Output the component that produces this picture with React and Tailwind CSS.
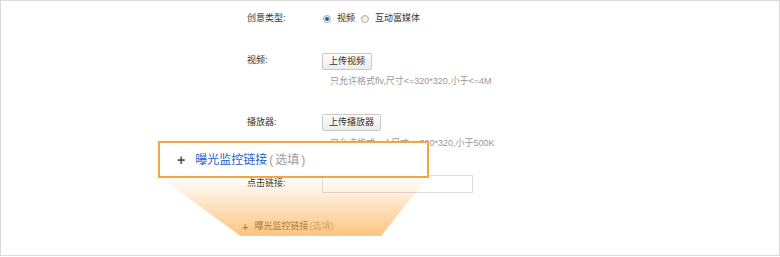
import React from "react";

function Radio({ checked }) {
  return (
    <span className="relative inline-flex h-[8px] w-[8px] items-center justify-center rounded-full border border-[#a9a9a9] bg-gradient-to-b from-[#e9e9e9] to-[#fbfbfb]">
      {checked && <span className="h-[4px] w-[4px] rounded-full bg-[#1d5fa6]" />}
    </span>
  );
}

function Btn({ children }) {
  return (
    <span className="inline-flex h-[17px] items-center rounded-[2px] border border-[#c9c9c9] bg-gradient-to-b from-[#fdfdfd] to-[#ececec] px-[6px] text-[9px] leading-none text-[#333]">
      {children}
    </span>
  );
}

export default function App() {
  return (
    <div className="relative h-[256px] w-[780px] overflow-hidden border border-[#dadada] bg-white font-['Liberation_Sans','Noto_Sans_CJK_SC',sans-serif] text-[9px] text-[#333]">
      <div className="flex flex-col pl-[246px] pt-[12px]">
        <div className="flex h-[12px] items-center">
          <span className="w-[75px]">创意类型:</span>
          <span className="ml-[1px] flex items-center gap-[6px]">
            <Radio checked />
            <span>视频</span>
            <Radio />
            <span>互动富媒体</span>
          </span>
        </div>

        <div className="mt-[28px] flex h-[16px] items-center">
          <span className="w-[75px]">视频:</span>
          <Btn>上传视频</Btn>
        </div>
        <div className="mt-[7px] flex h-[12px] items-center pl-[83px] text-[#999]">
          只允许格式flv,尺寸&lt;=320*320,小于&lt;=4M
        </div>

        <div className="mt-[26px] flex h-[17px] items-center">
          <span className="w-[75px]">播放器:</span>
          <Btn>上传播放器</Btn>
        </div>
        <div className="mt-[7px] flex h-[12px] items-center pl-[83px] text-[#999]">
          只允许格式swf,尺寸&lt;=320*320,小于500K
        </div>

        <div className="mt-[25px] flex h-[18px] items-center">
          <span className="w-[75px]">点击链接:</span>
          <span className="h-[18px] w-[151px] border border-[#dedede] bg-white" />
        </div>

        <div className="ml-[-5px] mt-[28px] flex h-[12px] items-center">
          <span className="mr-[6px] text-[11px] font-bold text-[#666]">+</span>
          <span className="text-[#555]">曝光监控链接</span>
          <span className="ml-[1px] text-[#aaa]">(选填)</span>
        </div>
      </div>

      <div className="absolute left-[159px] top-[176px] h-[59px] w-[268px] bg-gradient-to-b from-[rgba(252,168,60,0)] to-[rgba(250,160,50,0.62)] [clip-path:polygon(0_0,100%_0,82.5%_100%,30%_100%)]" />

      <div className="absolute left-[157px] top-[140px] flex h-[37px] w-[271px] items-center border-2 border-[#f6a53c] bg-white pl-[17px]">
        <span className="mr-[10px] text-[14px] font-bold leading-none text-[#555]">+</span>
        <span className="text-[12px] text-[#2a5fc7]">曝光监控链接</span>
        <span className="ml-[2px] flex items-center text-[12px] text-[#9a9a9a]">
          <span className="mr-[2px]">(</span>
          <span>选填</span>
          <span className="ml-[2px]">)</span>
        </span>
      </div>
    </div>
  );
}
